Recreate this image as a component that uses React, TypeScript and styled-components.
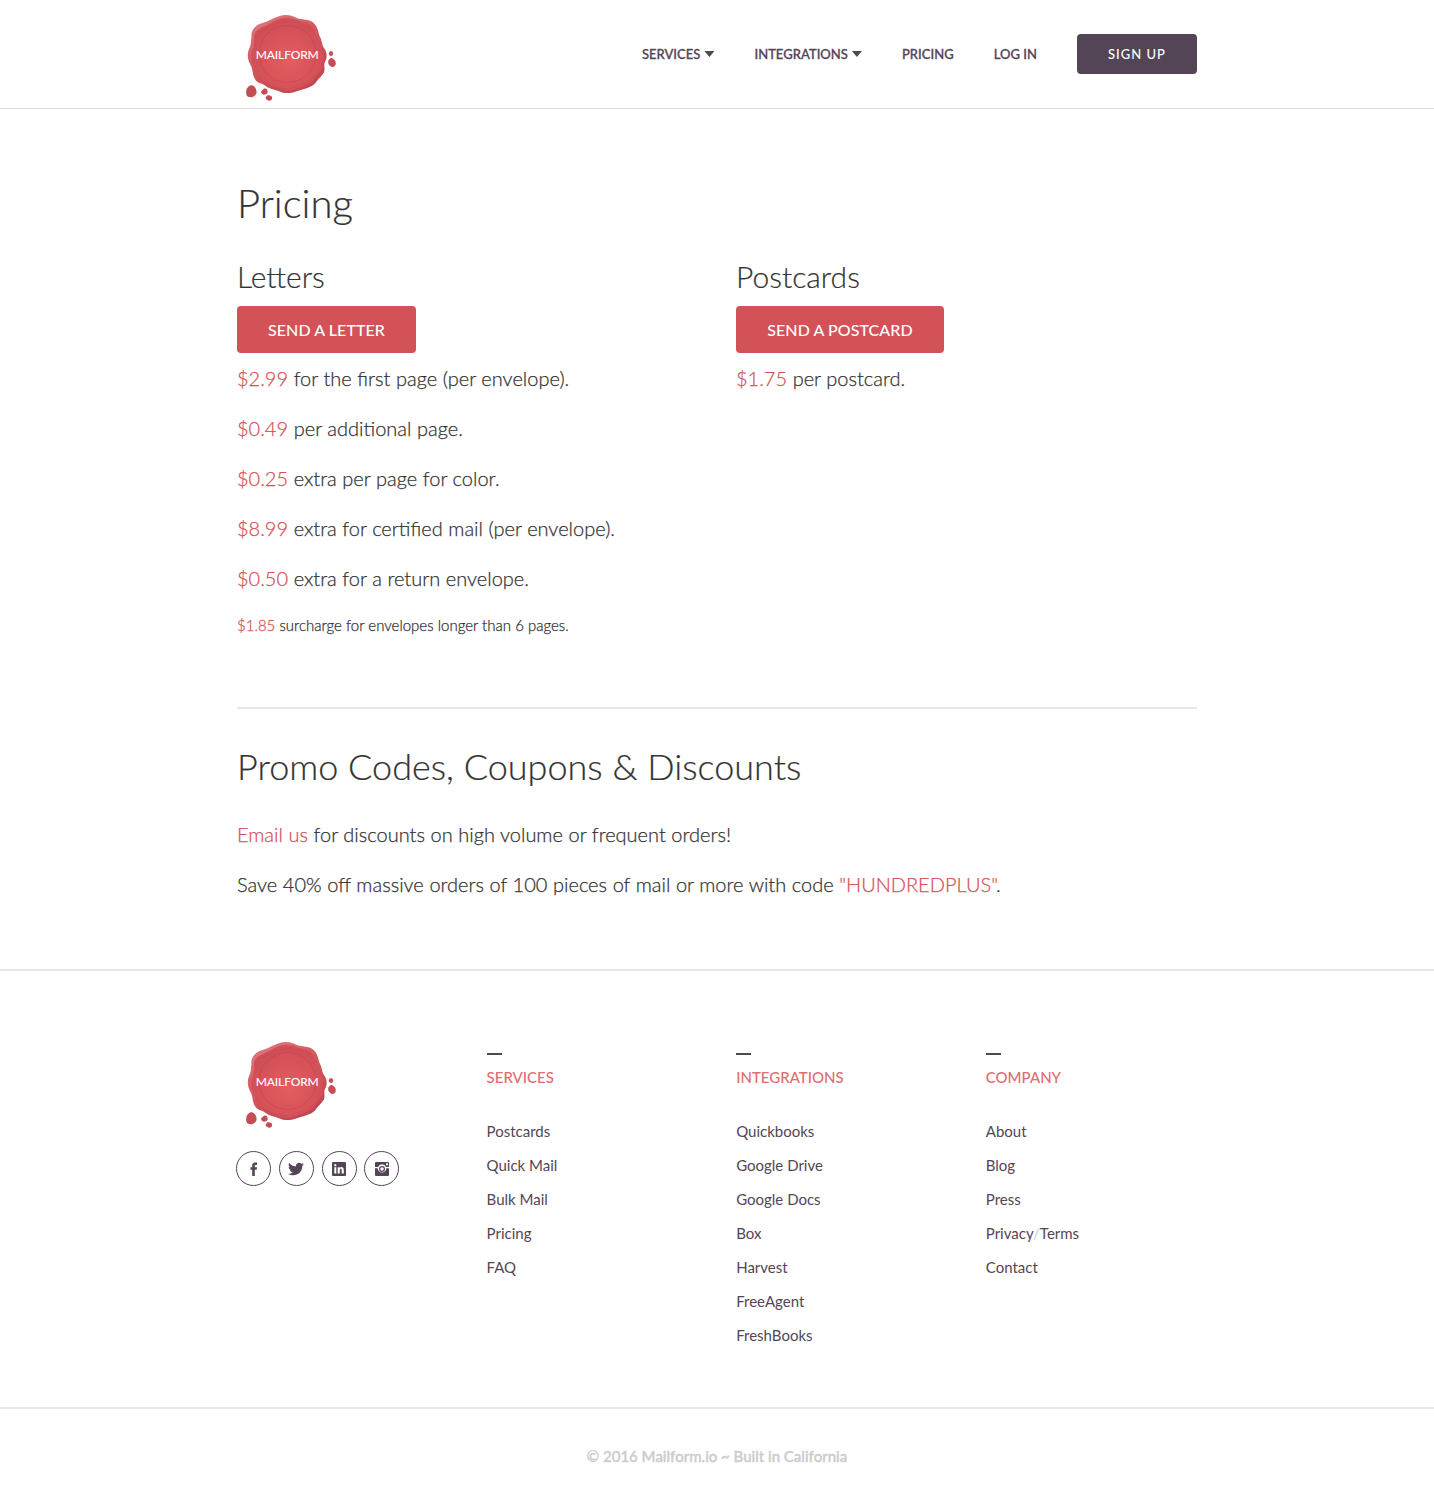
import React from 'react';
import styled, { createGlobalStyle } from 'styled-components';

const ink = '#544556';
const red = '#d35257';

const Global = createGlobalStyle`
  *, *::before, *::after { box-sizing: border-box; }
  body { margin: 0; background: #fff; color: #333; font-family: Lato, 'Liberation Sans', sans-serif; font-weight: 300; }
  a { color: inherit; text-decoration: none; }
  h1, h2, h3, h4, p, ul { margin: 0; padding: 0; font-weight: inherit; }
`;

const Page = styled.div`
  min-height: 1503px;
  overflow: hidden;
`;

const Container = styled.div`
  width: 960px;
  margin: 0 auto;
`;

const Header = styled.header`
  height: 109px;
  border-bottom: 1px solid #ddd;
`;

const HeaderRow = styled(Container)`
  display: flex;
  justify-content: space-between;
  align-items: center;
  height: 108px;
`;

const Seal = styled.svg`
  display: block;
  width: 100px;
  height: 94px;
  overflow: visible;
`;

const Nav = styled.nav`
  display: flex;
  align-items: center;
  gap: 40px;
`;

const NavLink = styled.a`
  display: flex;
  align-items: center;
  gap: 4px;
  color: ${ink};
  font-size: 13px;
  font-weight: 500;
  letter-spacing: 0.03px;
  -webkit-text-stroke: 0.3px ${ink};
  line-height: 20px;
`;

const Caret = styled.span`
  width: 10px;
  height: 6px;
  background: ${ink};
  clip-path: polygon(0 0, 100% 0, 50% 100%);
`;

const SignUp = styled.a`
  width: 120px;
  height: 40px;
  border-radius: 4px;
  background: ${ink};
  color: #fff;
  font-size: 13px;
  font-weight: 500;
  letter-spacing: 1px;
  line-height: 40px;
  text-align: center;
`;

const Main = styled(Container)`
  padding-top: 64px;
`;

const Title = styled.h1`
  font-size: 40px;
  line-height: 60px;
  -webkit-text-stroke: 0.2px;
`;

const Columns = styled.div`
  display: grid;
  grid-template-columns: 499px 1fr;
  height: 476px;
  padding-top: 21px;
  border-bottom: 2px solid #e6e6e6;
`;

const ProductName = styled.h2`
  font-size: 30px;
  line-height: 45px;
  -webkit-text-stroke: 0.2px;
`;

const Action = styled.a<{ $width: number }>`
  display: block;
  width: ${({ $width }) => $width}px;
  height: 47px;
  margin: 7px 0 10px;
  border-radius: 4px;
  background: ${red};
  color: #fff;
  font-size: 16px;
  font-weight: 500;
  letter-spacing: 0.08px;
  line-height: 48px;
  text-align: center;
`;

const Text = styled.p`
  margin-bottom: 20px;
  font-size: 20px;
  line-height: 30px;
  word-spacing: 0.15px;
  -webkit-text-stroke: 0.25px;
`;

const SmallText = styled(Text)`
  padding-top: 1px;
  font-size: 15px;
  line-height: 22.5px;
  word-spacing: 0.05px;
`;

const Accent = styled.span`
  color: ${red};
`;

const PromoTitle = styled.h2`
  margin: 30px 0 26px;
  font-size: 36px;
  line-height: 54px;
  -webkit-text-stroke: 0.2px;
`;

const Footer = styled.footer`
  margin-top: 70px;
  border-top: 2px solid #e6e6e6;
`;

const FooterGrid = styled(Container)`
  display: grid;
  grid-template-columns: 249.6px 249.6px 249.6px 1fr;
  height: 436px;
  padding-top: 63px;
`;

const Socials = styled.div`
  display: flex;
  gap: 7.8px;
  margin: 23px 0 0 -1px;
`;

const Social = styled.a`
  display: grid;
  place-items: center;
  width: 35px;
  height: 35px;
  border: 1px solid ${ink};
  border-radius: 50%;
  color: ${ink};
`;

const LinkGroup = styled.section`
  padding-top: 19px;

  &::before {
    content: '';
    display: block;
    width: 15px;
    height: 2px;
    background: ${ink};
  }
`;

const GroupTitle = styled.h4`
  margin: 11px 0 26px;
  color: #e06c70;
  font-size: 15px;
  font-weight: 500;
  line-height: 22px;
`;

const LinkItem = styled.li`
  height: 34px;
  list-style: none;
  color: ${ink};
  font-size: 15px;
  font-weight: 400;
  line-height: 34px;
`;

const Slash = styled.span`
  color: #ccc;
`;

const Copyright = styled.div`
  border-top: 2px solid #e6e6e6;
  color: #ccc;
  font-size: 15px;
  font-weight: 500;
  -webkit-text-stroke: 0.4px #ccc;
  line-height: 22px;
  padding-top: 36px;
  text-align: center;
`;

function Logo({ id }: { id: string }) {
  return (
    <Seal viewBox="0 0 100 94" role="img" aria-label="Mailform">
      <defs>
        <radialGradient id={id + 'wax'} cx="52%" cy="58%" r="52%">
          <stop offset="0" stopColor="#e35d61" />
          <stop offset="0.65" stopColor="#d9545a" />
          <stop offset="1" stopColor="#d04e56" />
        </radialGradient>
        <linearGradient id={id + 'rim'} x1="0.1" y1="0" x2="0.7" y2="1">
          <stop offset="0" stopColor="#e07a80" />
          <stop offset="0.45" stopColor="#d4585f" />
          <stop offset="1" stopColor="#be4650" />
        </linearGradient>
      </defs>
      <path
        d="M49 8C56 8 59 11.500 64 12C70 13 75 13 78 17.500C81 21 81 25 83 30C85 33 84.500 37 87 41C90 45 90.500 50 88.500 54C86 58 88.500 61 87 65.500C84 70 81 72 78 76.500C73 81.500 65 82 59 84.500C52 87 46 86.500 40 83.500C35 82 31 81.500 28 78.500C25 76 20 76.500 18 72C15 67 16 62 13.500 58C10.500 53 10 47 12 42C14.500 38 13.500 34 14.500 30C13.500 24 17.500 19.500 22.500 17C28 15.500 31 14 35 12C40 10 44 8 49 8Z"
        fill={`url(#${id}rim)`}
      />
      <path
        d="M49 11C57 11 61 14 66 15C74 16 76 20 78 26C80 32 83 36 85 42C88 48 85 53 85.500 60C83 66 79 69 76 74C69 79 61 81 54 83.500C45 84.500 37 80 30 76C23 74 19 69 18 62C14 55 13 48 16 42C18 35 16 31 18 26C21 21 29 19 34 16C39 13 43 11 49 11Z"
        fill={`url(#${id}wax)`}
      />
      <path d="M22 27C31 18 42 15 55 14M21 71C31 79 43 83 54 81C65 80 73 75 81 67" fill="none" stroke="#c74a53" strokeWidth="1.2" opacity="0.45" />
      <circle cx="50.500" cy="47" r="28.500" fill="none" stroke="#b9424b" strokeWidth="0.8" opacity="0.6" />
      <ellipse cx="94" cy="46.500" rx="2.200" ry="2.500" fill="#c9525a" />
      <path d="M94.500 51C97.500 51.500 99.500 55 98.500 58C97 61 93.500 60.500 91.500 57C90.500 53.500 92 51.500 94.500 51Z" fill="#c64d56" />
      <path d="M13 78.500C16 77 20 81 19.500 86C18 91 11 91.500 9.500 88C8.500 84 9.500 80.500 13 78.500ZM27 81.500C30 81 31 83 30.500 86C28 89 24 87.500 24 84.500ZM30 88.500C32.500 87.500 36 89 35 92C33.500 95 30 94 28.500 91Z" fill="#c44c55" />
      <text x="18.800" y="52.200" fill="#fff" fontFamily="Lato, 'Liberation Sans', sans-serif" fontSize="12" fontWeight="500" textLength="63" lengthAdjust="spacing">
        MAILFORM
      </text>
    </Seal>
  );
}

const socialIcons = [
  { name: 'Facebook', path: 'M6.200 15V8.700H4.500V6.200H6.200V4.700C6.200 2.500 7.300 1.500 9.200 1.500H11V4H9.800C9 4 8.800 4.400 8.800 5V6.200H11L10.700 8.700H8.800V15Z' },
  { name: 'Twitter', path: 'M16 3.200C15.400 3.500 14.700 3.700 14.100 3.700C14.800 3.300 15.200 2.700 15.500 2C14.800 2.400 14.200 2.600 13.400 2.800C11.300 .5 7.500 2 7.900 5.500C5.200 5.400 2.800 4.100 1.100 2.100C.2 3.600 .7 5.400 2.100 6.300C1.600 6.300 1.100 6.100 .6 5.900C.6 7.400 1.700 8.700 3.200 9.100C2.700 9.200 2.200 9.200 1.800 9.100C2.200 10.400 3.300 11.300 4.700 11.400C3.500 12.300 1.800 12.900 0 12.700C6.800 17 14.500 12.300 14.300 4.800C15 4.400 15.600 3.800 16 3.200Z' },
  { name: 'LinkedIn', path: 'M2 1H14Q15 1 15 2V14Q15 15 14 15H2Q1 15 1 14V2Q1 1 2 1ZM3.300 6.200V12.500H5.300V6.200ZM4.300 3.100A1.150 1.150 0 1 0 4.300 5.400A1.150 1.150 0 0 0 4.300 3.100ZM6.700 6.200V12.500H8.800V9.400C8.800 7.300 10.700 7.300 10.700 9.300V12.500H12.800V9C12.800 6 10.100 5.300 8.700 7.100V6.200Z' },
  { name: 'Instagram', path: 'M2 1H14Q15 1 15 2V6H12A4.300 4.300 0 0 0 4 6H1V2Q1 1 2 1ZM12 2.200V4.200H14V2.200ZM1 7.200H3.700A4.300 4.300 0 1 0 12.300 7.200H15V14Q15 15 14 15H2Q1 15 1 14ZM8 5A3 3 0 1 0 8 11A3 3 0 0 0 8 5ZM8 6.200A1.800 1.800 0 1 1 8 9.800A1.800 1.800 0 0 1 8 6.200Z' },
];

const letterPrices = [
  ['$2.99', 'for the first page (per envelope).'],
  ['$0.49', 'per additional page.'],
  ['$0.25', 'extra per page for color.'],
  ['$8.99', 'extra for certified mail (per envelope).'],
  ['$0.50', 'extra for a return envelope.'],
];

const footerGroups = [
  { title: 'SERVICES', links: ['Postcards', 'Quick Mail', 'Bulk Mail', 'Pricing', 'FAQ'] },
  { title: 'INTEGRATIONS', links: ['Quickbooks', 'Google Drive', 'Google Docs', 'Box', 'Harvest', 'FreeAgent', 'FreshBooks'] },
  { title: 'COMPANY', links: ['About', 'Blog', 'Press', 'Privacy/Terms', 'Contact'] },
];

export default function App() {
  return (
    <Page>
      <Global />
      <Header>
        <HeaderRow>
          <a href="#"><Logo id="top" /></a>
          <Nav>
            <NavLink href="#">SERVICES<Caret /></NavLink>
            <NavLink href="#">INTEGRATIONS<Caret /></NavLink>
            <NavLink href="#">PRICING</NavLink>
            <NavLink href="#">LOG IN</NavLink>
            <SignUp href="#">SIGN UP</SignUp>
          </Nav>
        </HeaderRow>
      </Header>
      <Main as="main">
        <Title>Pricing</Title>
        <Columns>
          <section>
            <ProductName>Letters</ProductName>
            <Action href="#" $width={179}>SEND A LETTER</Action>
            {letterPrices.map(([price, text]) => (
              <Text key={price}><Accent>{price}</Accent> {text}</Text>
            ))}
            <SmallText><Accent>$1.85</Accent> surcharge for envelopes longer than 6 pages.</SmallText>
          </section>
          <section>
            <ProductName>Postcards</ProductName>
            <Action href="#" $width={208}>SEND A POSTCARD</Action>
            <Text><Accent>$1.75</Accent> per postcard.</Text>
          </section>
        </Columns>
        <PromoTitle>Promo Codes, Coupons &amp; Discounts</PromoTitle>
        <Text><Accent as="a" href="#">Email us</Accent> for discounts on high volume or frequent orders!</Text>
        <Text>Save 40% off massive orders of 100 pieces of mail or more with code <Accent>"HUNDREDPLUS"</Accent>.</Text>
      </Main>
      <Footer>
        <FooterGrid>
          <div>
            <Logo id="bottom" />
            <Socials>
              {socialIcons.map(({ name, path }) => (
                <Social key={name} href="#" aria-label={name}>
                  <svg width="16" height="16" viewBox="0 0 16 16" fill="currentColor" fillRule="evenodd"><path d={path} /></svg>
                </Social>
              ))}
            </Socials>
          </div>
          {footerGroups.map(({ title, links }) => (
            <LinkGroup key={title}>
              <GroupTitle>{title}</GroupTitle>
              <ul>
                {links.map((link) => {
                  const [first, second] = link.split('/');
                  return (
                    <LinkItem key={link}>
                      <a href="#">{first}</a>
                      {second && <><Slash>/</Slash><a href="#">{second}</a></>}
                    </LinkItem>
                  );
                })}
              </ul>
            </LinkGroup>
          ))}
        </FooterGrid>
        <Copyright>© 2016 Mailform.io ~ Built in California</Copyright>
      </Footer>
    </Page>
  );
}
